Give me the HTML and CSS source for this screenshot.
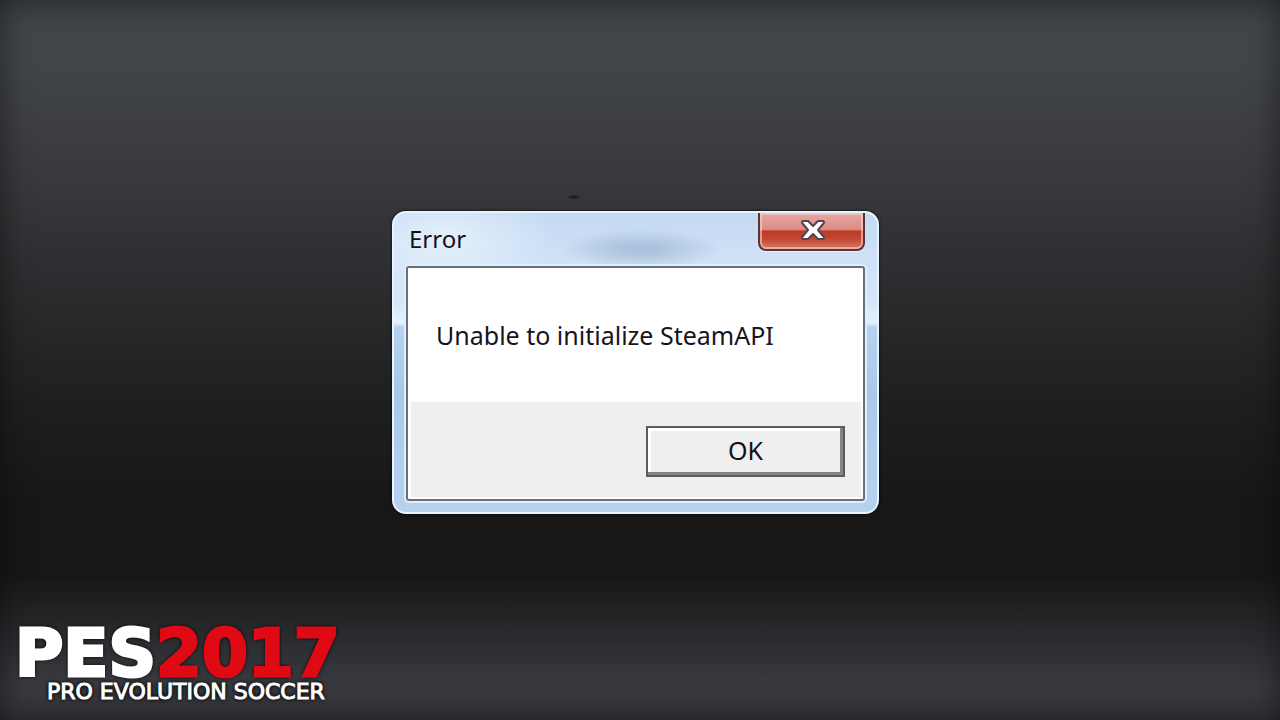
FILE: index.html
```
<!DOCTYPE html>
<html lang="en">
<head>
    <meta charset="UTF-8">
    <meta name="viewport" content="width=device-width, initial-scale=1.0">
    <title>PES 2017 - Error</title>
    <link rel="stylesheet" href="styles.css">
</head>
<body>
    <main class="page">
        <div class="dialog" role="alertdialog" aria-labelledby="dialog-title" aria-describedby="dialog-message">
            <div class="title-bar">
                <h1 class="title" id="dialog-title">Error</h1>
                <button class="close" type="button" aria-label="Close">
                    <svg width="28" height="24" viewBox="0 0 28 24">
                        <path d="M5 2H10L15 7L20 2H25Q27 3 25 5L20 11L25 17Q27 19 25 20H20L15 15L10 20H5Q3 19 5 17L10 11L5 5Q3 3 5 2Z" fill="#fff" stroke="#55454f" stroke-width="2" stroke-linejoin="round"/>
                    </svg>
                </button>
            </div>
            <div class="client">
                <p class="message" id="dialog-message">Unable to initialize SteamAPI</p>
                <div class="actions">
                    <button class="ok" type="button">OK</button>
                </div>
            </div>
        </div>
        <div class="logo">
            <div class="logo-name">PES<span class="logo-year">2017</span></div>
            <div class="logo-sub">PRO EVOLUTION SOCCER</div>
        </div>
    </main>
</body>
</html>
```
FILE: styles.css
```
* {
    box-sizing: border-box;
}
body {
    margin: 0;
    font-family: "Noto Sans", "Open Sans", sans-serif;
    background: linear-gradient(#414448 0%, #434649 8%, #38393c 25%, #2b2c2e 40%, #1e1f20 56%, #171717 70%, #171717 80%, #292a2d 88%, #393a3f 95%, #36373b 100%);
}
.page {
    min-height: 100vh;
    display: grid;
    grid-template-rows: 1fr auto 1fr;
    padding: 20px 24px 15px 15px;
    box-shadow: inset 0 0 32px rgba(0, 0, 0, 0.5);
    background: radial-gradient(ellipse 7px 2px at calc(50% - 66px) 197px, #1c1d1f 50%, transparent);
}
.dialog {
    grid-row: 2;
    justify-self: center;
    width: 487px;
    max-width: 100%;
    padding: 0 12px 11px;
    border: 2px solid #e8f4fd;
    border-radius: 14px;
    background:
        radial-gradient(ellipse 80px 20px at 51% 36px, rgba(125, 150, 185, 0.4) 20%, transparent),
        radial-gradient(ellipse 110px 60px at 50px 26px, rgba(240, 248, 255, 0.7), transparent),
        linear-gradient(#c4daf3 0, #cfe1f6 50px, #d4e6f8 90px, #e4f1fb 110px, #b5d3ef 114px, #a9c8e8 180px, #b7d2ef 100%);
    box-shadow: 0 0 3px #000;
}
.title-bar {
    display: flex;
    justify-content: space-between;
    align-items: flex-start;
    height: 53px;
}
.title {
    margin: 0;
    padding: 8px 3px;
    font-size: 24px;
    line-height: 36px;
    font-weight: 400;
    color: #10131c;
}
.close {
    display: flex;
    align-items: center;
    justify-content: center;
    width: 107px;
    height: 38px;
    padding: 0;
    border: 2px solid #56343b;
    border-top: 0;
    border-radius: 0 0 8px 8px;
    background: linear-gradient(#e5aaa3 0, #d98b82 46%, #bd3a27 50%, #c04531 70%, #d97866 100%);
    box-shadow: inset 0 0 0 2px rgba(255, 210, 205, 0.6), 0 1px 1px #edf6ff;
    cursor: pointer;
}
.client {
    border: 2px solid #66707f;
    border-radius: 3px;
    background: #fff;
    box-shadow: 0 0 0 2px #e0effc;
}
.message {
    margin: 0;
    padding: 49px 28px;
    font-size: 25px;
    line-height: 36px;
    color: #17131f;
}
.actions {
    display: flex;
    justify-content: flex-end;
    margin: 0 2px 2px 3px;
    padding: 24px 16px 20px;
    background: #efefef;
}
.ok {
    width: 199px;
    height: 51px;
    padding: 0 0 3px;
    border: 2px solid #5c5c5c;
    background: #efefef;
    box-shadow: inset -3px -3px #858585, inset 3px 3px #fff;
    font-family: inherit;
    font-size: 25px;
    color: #10131c;
    cursor: pointer;
}
.logo {
    grid-row: 3;
    justify-self: start;
    align-self: end;
    color: #fff;
    text-shadow: 0 0 4px #000, 0 0 4px #000;
    font-family: "DejaVu Sans", sans-serif;
}
.logo-name {
    font-size: 66px;
    line-height: 50px;
    font-weight: 700;
    -webkit-text-stroke: 3px currentColor;
}
.logo-year {
    color: #df0a14;
}
.logo-sub {
    padding: 0 32px;
    font-size: 22px;
    line-height: 26px;
    -webkit-text-stroke: 1px currentColor;
}
```
